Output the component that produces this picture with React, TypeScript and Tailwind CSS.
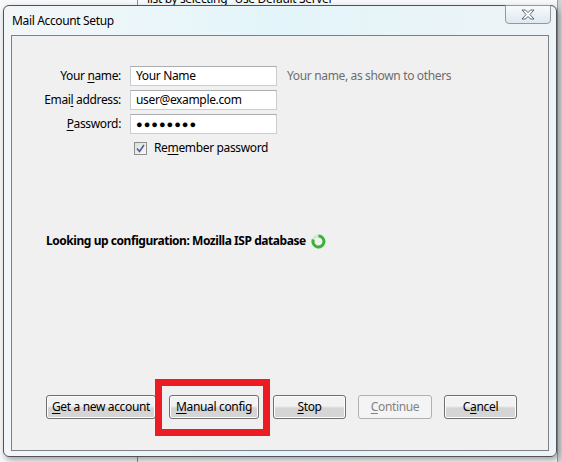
import React from 'react'

const font = { fontFamily: '"Noto Sans", "Open Sans", sans-serif' }

function U({ children }: { children: React.ReactNode }) {
  return <span className="underline underline-offset-2 decoration-1">{children}</span>
}

function WinButton({ children, disabled, className = '' }: { children: React.ReactNode; disabled?: boolean; className?: string }) {
  return (
    <button
      className={
        'h-[24px] rounded-[3px] border text-[12px] leading-none flex items-center justify-center ' +
        (disabled
          ? 'border-[#adb2b5] bg-[#f4f4f4] text-[#838383] '
          : 'border-[#707070] bg-linear-to-b from-[#f2f2f2] from-45% to-[#d5d5d5] to-55% text-black shadow-[inset_0_0_0_1px_#fcfcfc] ') +
        className
      }
    >
      <span>{children}</span>
    </button>
  )
}

function Field({ label, value, password }: { label: React.ReactNode; value: string; password?: boolean }) {
  return (
    <>
      <label className="text-right text-[12px] text-black leading-[20px]">{label}</label>
      <div className="h-[20px] border border-[#c9ccd1] border-t-[#abadb3] bg-white px-[5px] text-[12px] leading-[18px] text-black">
        {password ? <span className="tracking-[1px] text-[11px]">●●●●●●●●</span> : value}
      </div>
    </>
  )
}

function Spinner() {
  return (
    <svg width="15" height="15" viewBox="0 0 15 15">
      <circle cx="7.5" cy="7.5" r="5.5" fill="none" stroke="#c9efc4" strokeWidth="3" />
      <path d="M7.5 2 A5.5 5.5 0 1 1 2.3 5.6" fill="none" stroke="#3db23a" strokeWidth="3" />
    </svg>
  )
}

export default function App() {
  return (
    <div className="relative w-[562px] h-[462px] overflow-hidden bg-[#f7f8f9] tracking-[-0.35px]" style={font}>
      {/* window behind the dialog */}
      <div className="absolute left-[137px] top-0 h-full w-px bg-[#8e9194]" />
      <div className="absolute left-[147px] top-[-10px] text-[12px] text-black whitespace-nowrap">
        list by selecting "Use Default Server"
      </div>
      <div className="absolute right-0 top-0 h-full w-[5px] bg-[#d0d3d6] border-l border-[#9a9ea2]" />

      {/* dialog */}
      <div className="absolute left-[3px] top-[5px] w-[554px] h-[452px] rounded-[6px] border border-[#4f5458] bg-linear-to-r from-[#f3f6f8] via-[#e3f5fa] to-[#eef3f6] shadow-[2px_3px_6px_rgba(0,0,0,0.35)] flex flex-col">
        <div className="h-[29px] flex items-center pl-[8px] shrink-0 relative">
          <span className="text-[12px] text-black">Mail Account Setup</span>
          <div className="absolute right-[5px] top-[-1px] w-[46px] h-[19px] rounded-b-[4px] border border-[#8d99a3] bg-linear-to-b from-[#f6fafd] to-[#dfe9f0] flex items-center justify-center">
            <svg width="16" height="11" viewBox="0 0 16 11">
              <path
                d="M2 1 H5.5 L8 3.6 L10.5 1 H14 L10 5.5 L14 10 H10.5 L8 7.4 L5.5 10 H2 L6 5.5 Z"
                fill="#ffffff"
                stroke="#5c6670"
                strokeWidth="1"
                strokeLinejoin="round"
              />
            </svg>
          </div>
        </div>

        <div className="mx-[7px] mb-[5px] flex-1 border border-[#7d8185] bg-[#f0f0f0] flex flex-col">
          <div className="pt-[30px] grid grid-cols-[109px_147px_auto] gap-x-[9px] gap-y-[4px] items-center">
            <Field label={<>Your <U>n</U>ame:</>} value="Your Name" />
            <span className="ml-[1px] text-[12px] text-[#6d6d6d] leading-[20px]">Your name, as shown to others</span>
            <Field label={<>Emai<U>l</U> address:</>} value="user@example.com" />
            <span />
            <Field label={<><U>P</U>assword:</>} value="password" password />
            <span />
          </div>

          <div className="mt-[6px] ml-[122px] flex items-center gap-[7px] h-[16px]">
            <div className="w-[13px] h-[13px] border border-[#8f8f8f] bg-linear-to-br from-[#dcdcdc] to-[#f8f8f8] flex items-center justify-center">
              <svg width="9" height="9" viewBox="0 0 9 9">
                <path d="M1 4.5 L3.5 7.5 L8 1" fill="none" stroke="#4a5f97" strokeWidth="1.6" />
              </svg>
            </div>
            <span className="text-[12px] text-black">Re<U>m</U>ember password</span>
          </div>

          <div className="mt-[77px] ml-[34px] flex items-center gap-[5px] h-[16px]">
            <span className="text-[12px] font-bold text-black tracking-[-0.45px]">Looking up configuration: Mozilla ISP database</span>
            <Spinner />
          </div>

          <div className="mt-[146px] ml-[34px] flex items-center">
            <WinButton className="w-[110px]"><U>G</U>et a new account</WinButton>
            <WinButton className="ml-[13px] w-[90px]"><U>M</U>anual config</WinButton>
            <WinButton className="ml-[14px] w-[73px]"><U>S</U>top</WinButton>
            <WinButton disabled className="ml-[12px] w-[74px]"><U>C</U>ontinue</WinButton>
            <WinButton className="ml-[12px] w-[73px]">C<U>a</U>ncel</WinButton>
          </div>
        </div>
      </div>

      {/* annotation */}
      <div className="absolute left-[155px] top-[379px] w-[115px] h-[57px] border-[7px] border-[#ed1c24]" />
    </div>
  )
}
